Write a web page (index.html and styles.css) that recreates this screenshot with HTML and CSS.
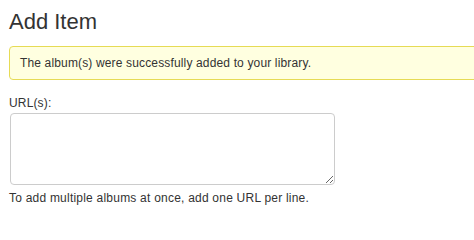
FILE: index.html
```html
<!DOCTYPE html>
<html lang="en">
<head>
<meta charset="utf-8">
<title>Add Item</title>
<link rel="stylesheet" href="styles.css">
</head>
<body>
<main class="page">
  <h1 class="title">Add Item</h1>
  <div class="alert">The album(s) were successfully added to your library.</div>
  <form class="form">
    <label class="label" for="urls">URL(s):</label>
    <textarea class="urls" id="urls"></textarea>
    <p class="help">To add multiple albums at once, add one URL per line.</p>
  </form>
</main>
</body>
</html>
```
FILE: styles.css
```css
html, body {
  margin: 0;
  padding: 0;
  background: #fff;
}
body {
  font-family: "Liberation Sans", Arial, sans-serif;
  font-size: 12px;
  line-height: 18px;
  letter-spacing: 0.15px;
  color: #333;
}
.page {
  padding: 9px 0 0 9px;
}
.title {
  margin: 0;
  font-size: 22px;
  line-height: 26px;
  letter-spacing: 0;
  font-weight: normal;
  color: #333;
}
.alert {
  margin-top: 11px;
  margin-right: -20px;
  padding: 7px 10px;
  background: #ffffe0;
  border: 1px solid #e6db55;
  border-radius: 4px;
}
.form {
  margin-top: 14px;
  display: flex;
  flex-direction: column;
  align-items: flex-start;
}
.label {
  display: block;
  margin-bottom: 1px;
}
.urls {
  display: block;
  box-sizing: border-box;
  width: 325px;
  height: 72px;
  margin: 0 0 0 1px;
  padding: 4px 6px;
  border: 1px solid #ccc;
  border-radius: 4px;
  font-family: inherit;
  font-size: 12px;
  background: #fff;
}
.help {
  margin: 4px 0 0;
  letter-spacing: 0.22px;
}
```
